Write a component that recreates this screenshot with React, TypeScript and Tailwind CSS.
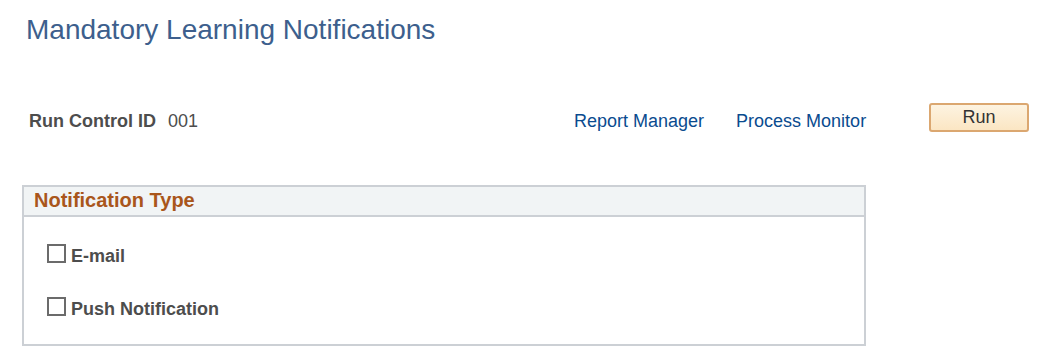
export default function App() {
  return (
    <div className="w-[1041px] h-[362px] bg-white font-['Liberation_Sans',Arial,sans-serif] overflow-hidden">
      <h1 className="pl-[26px] pt-[14px] text-[28px] leading-[32px] text-[#3d5f8d] font-normal">
        Mandatory Learning Notifications
      </h1>

      <div className="flex items-center mt-[60px] h-[30px]">
        <div className="pl-[29px] flex items-center w-[574px]">
          <span className="text-[18px] font-bold text-[#4d4d4d]">Run Control ID</span>
          <span className="ml-[12px] text-[18px] text-[#4d4d4d]">001</span>
        </div>
        <a className="text-[18px] text-[#0a4b8f]">Report Manager</a>
        <a className="ml-[32px] text-[18px] text-[#0a4b8f]">Process Monitor</a>
        <button className="ml-[63px] -mt-[8px] w-[100px] h-[29px] rounded-[3px] border-2 border-[#dba770] bg-gradient-to-b from-[#fdf3e1] to-[#fbe6c3] text-[18px] text-[#333] leading-none">
          Run
        </button>
      </div>

      <div className="ml-[22px] mt-[49px] w-[844px] h-[161px] border-2 border-[#ccd0d5]">
        <div className="h-[30px] bg-[#f1f4f5] border-b-2 border-[#ccd0d5] pl-[10px] pb-[3px] flex items-center">
          <span className="text-[20px] font-bold text-[#a9561b]">Notification Type</span>
        </div>
        <div className="pl-[23px] pt-[27px] flex flex-col gap-[34px]">
          <label className="flex items-end gap-[5px]">
            <span className="w-[19px] h-[19px] border-2 border-[#6b6b6b] bg-white" />
            <span className="text-[18px] font-bold text-[#4d4d4d] leading-[20px] -mb-[3px]">E-mail</span>
          </label>
          <label className="flex items-end gap-[5px]">
            <span className="w-[19px] h-[19px] border-2 border-[#6b6b6b] bg-white" />
            <span className="text-[18px] font-bold text-[#4d4d4d] leading-[20px] -mb-[3px]">Push Notification</span>
          </label>
        </div>
      </div>
    </div>
  );
}
